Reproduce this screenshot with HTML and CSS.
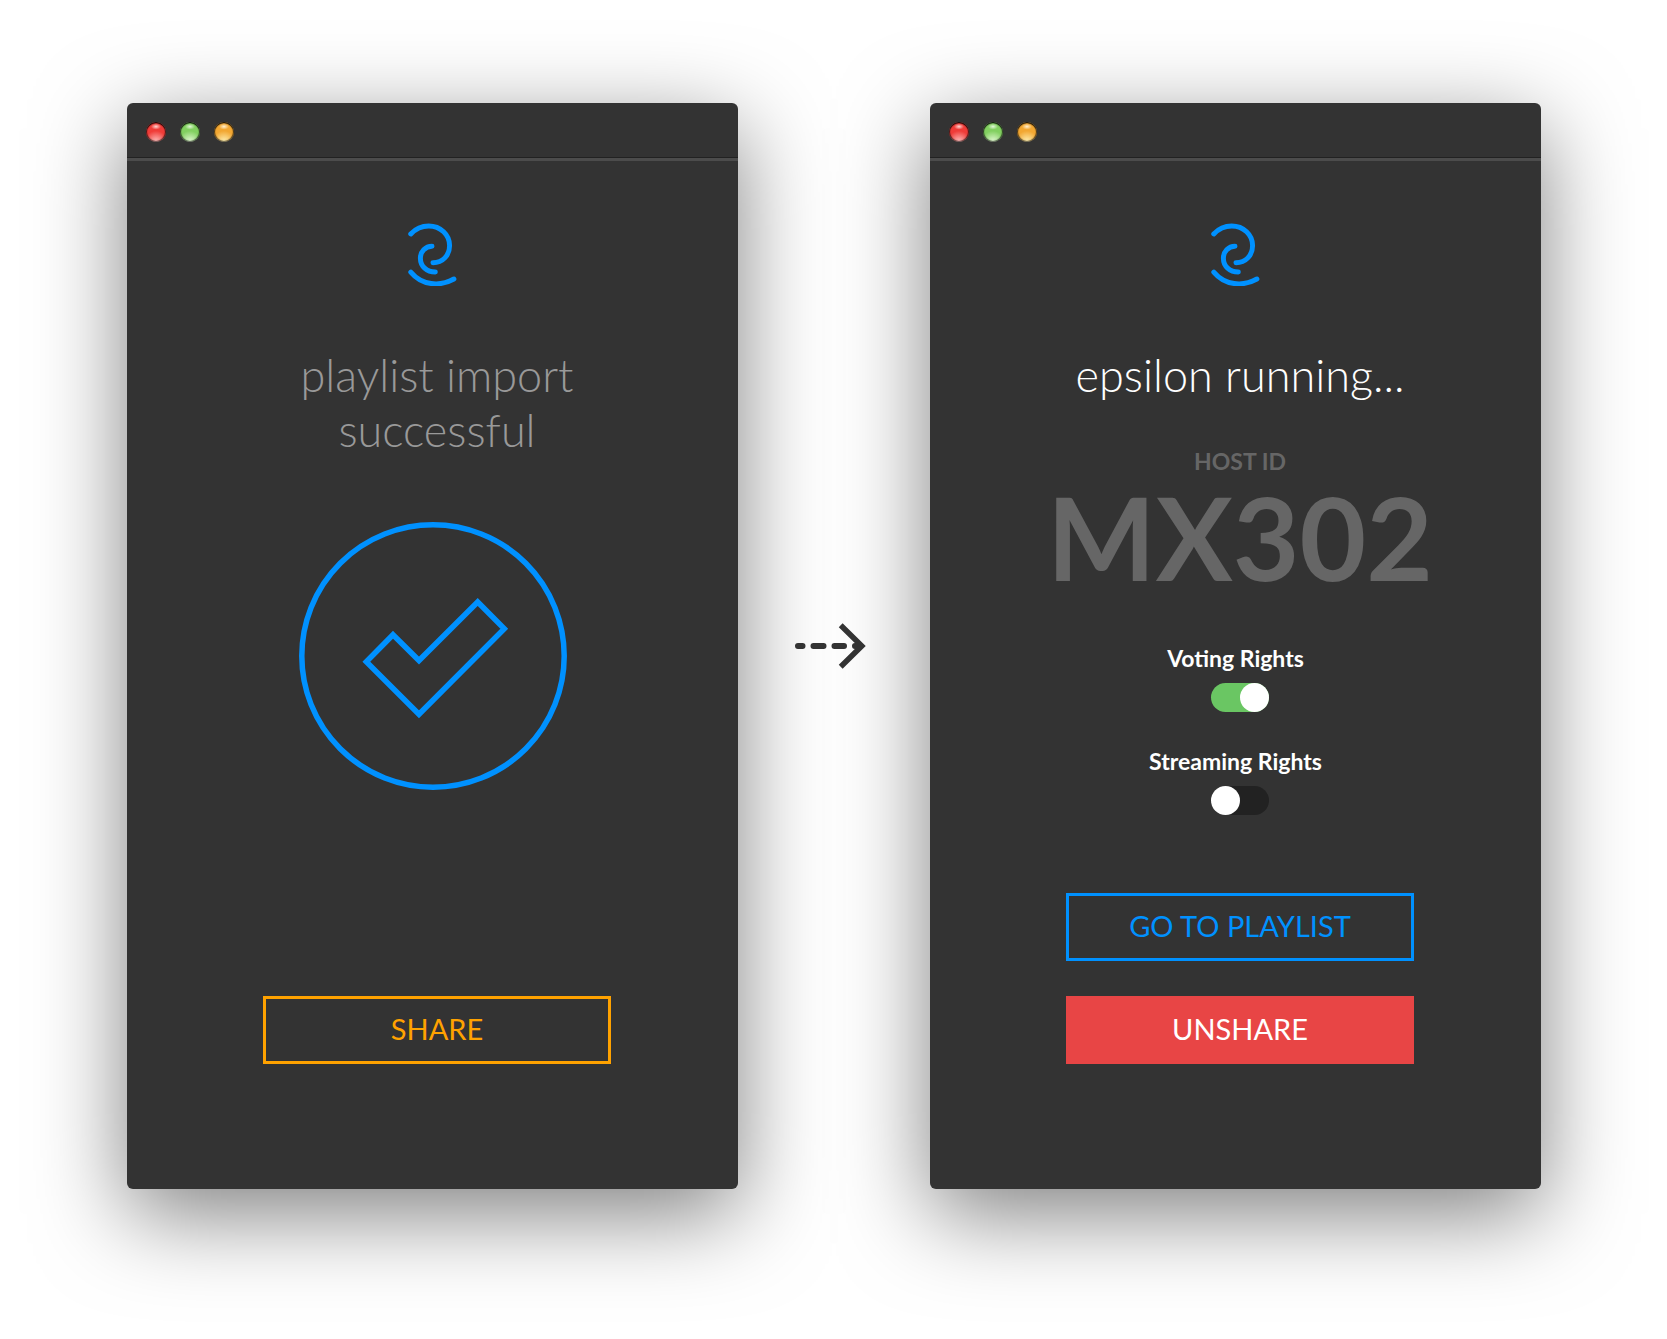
FILE: index.html
```html
<!DOCTYPE html>
<html lang="en">
<head>
<meta charset="utf-8">
<meta name="viewport" content="width=device-width, initial-scale=1">
<title>epsilon</title>
<link rel="stylesheet" href="styles.css">
</head>
<body>
<main class="flow">
  <section class="window">
    <header class="titlebar">
      <button class="light light-red" type="button" aria-label="Close"></button>
      <button class="light light-green" type="button" aria-label="Zoom"></button>
      <button class="light light-amber" type="button" aria-label="Minimize"></button>
    </header>
    <div class="screen">
      <svg class="logo" viewBox="54 54 147 190" aria-hidden="true">
        <path d="M62 87C76 72 95 63 116 63C152 63 179 90 179 122C179 152 158 174 129 174"/>
        <path d="M126 124C106 124 91 140 91 160C91 184 110 202 136 202"/>
        <path d="M62 202C95 242 149 247 192 223"/>
      </svg>
      <h1 class="title title-muted inset">playlist import successful</h1>
      <svg class="success" viewBox="0 0 268 268" aria-hidden="true">
        <circle cx="134" cy="134" r="131.2"/>
        <path d="M94 112.7L120 138.5L178.7 80L205.3 106.7L120 192.3L67.3 139.7Z"/>
      </svg>
      <div class="actions inset">
        <button class="button button-share" type="button">SHARE</button>
      </div>
    </div>
  </section>

  <svg class="arrow" viewBox="0 0 72 46" aria-hidden="true">
    <path class="arrow-dash" d="M4 23H8.500M19.500 23H29.500M40.500 23H50M61 23H66"/>
    <path class="arrow-head" d="M46.700 2.300L67.800 23L46.700 43.700"/>
  </svg>

  <section class="window">
    <header class="titlebar">
      <button class="light light-red" type="button" aria-label="Close"></button>
      <button class="light light-green" type="button" aria-label="Zoom"></button>
      <button class="light light-amber" type="button" aria-label="Minimize"></button>
    </header>
    <div class="screen">
      <svg class="logo" viewBox="54 54 147 190" aria-hidden="true">
        <path d="M62 87C76 72 95 63 116 63C152 63 179 90 179 122C179 152 158 174 129 174"/>
        <path d="M126 124C106 124 91 140 91 160C91 184 110 202 136 202"/>
        <path d="M62 202C95 242 149 247 192 223"/>
      </svg>
      <h1 class="title inset">epsilon running...</h1>
      <div class="host inset">
        <p class="host-label">HOST ID</p>
        <p class="host-id">MX302</p>
      </div>
      <div class="rights">
        <div class="right">
          <label for="voting">Voting Rights</label>
          <div class="inset"><input class="switch" id="voting" type="checkbox" role="switch" checked></div>
        </div>
        <div class="right">
          <label for="streaming">Streaming Rights</label>
          <div class="inset"><input class="switch" id="streaming" type="checkbox" role="switch"></div>
        </div>
      </div>
      <div class="actions inset">
        <button class="button button-playlist" type="button">GO TO PLAYLIST</button>
        <button class="button button-unshare" type="button">UNSHARE</button>
      </div>
    </div>
  </section>
</main>
</body>
</html>
```
FILE: styles.css
```css
:root {
  --blue: #0091ff;
  --orange: #ffa200;
  --red: #e84545;
  --green: #6ac663;
  --dark: #333333;
}

* {
  box-sizing: border-box;
}

body {
  margin: 0;
  background: #ffffff;
  color: #ffffff;
  font-family: Lato, "Liberation Sans", sans-serif;
}

h1,
p {
  margin: 0;
}

.flow {
  display: grid;
  grid-template-columns: minmax(400px, 1fr) 192px minmax(400px, 1fr);
  min-height: 100vh;
  padding: 103px 126px 150px 127px;
}

.window {
  display: flex;
  flex-direction: column;
  border-radius: 6px;
  background: var(--dark);
  box-shadow: 0 25px 90px rgba(0, 0, 0, 0.5);
}

/* Title bar */
.titlebar {
  display: flex;
  gap: 14px;
  height: 55px;
  padding: 19px 19px 0;
  border-bottom: 1px solid #222222;
}

.light {
  width: 20px;
  height: 20px;
  padding: 0;
  border: 0;
  border-radius: 50%;
  box-shadow: inset 0 1px 1px rgba(0, 0, 0, 0.8), inset 0 0 1px 1px rgba(0, 0, 0, 0.6);
}

.light-red {
  background:
    radial-gradient(ellipse 5px 3px at 50% 23%, #ffd6d3, transparent),
    radial-gradient(circle at 50% 100%, #ffc4c2, transparent 50%),
    #f03c38;
}

.light-green {
  background:
    radial-gradient(ellipse 5px 3px at 50% 23%, #e2f7d8, transparent),
    radial-gradient(circle at 50% 100%, #e8fbd9, transparent 50%),
    #82d060;
}

.light-amber {
  background:
    radial-gradient(ellipse 5px 3px at 50% 23%, #fff0d0, transparent),
    radial-gradient(circle at 50% 100%, #fff3b8, transparent 50%),
    #f2a732;
}

/* Window content */
.screen {
  display: flex;
  flex: 1;
  flex-direction: column;
  align-items: center;
  padding: 62px 0 125px;
  border-top: 3px solid #4c4c4c;
}

.inset {
  padding-left: 9px;
}

.logo {
  width: 49px;
  height: 63px;
  fill: none;
  stroke: var(--blue);
  stroke-width: 15;
  stroke-linecap: round;
}

.title {
  max-width: 357px;
  margin-top: 62px;
  font-size: 45px;
  font-weight: 300;
  line-height: 55px;
  text-align: center;
}

.title-muted {
  color: #999999;
}

.success {
  width: 268px;
  height: 268px;
  margin-top: 64px;
  fill: none;
  stroke: var(--blue);
  stroke-width: 5.5;
}

.host {
  margin-top: 44px;
  color: #666666;
  font-weight: 700;
  text-align: center;
}

.host-label {
  font-size: 23px;
  line-height: 28px;
}

.host-id {
  margin-top: 3px;
  font-size: 115px;
  line-height: 116px;
}

.rights {
  display: flex;
  flex-direction: column;
  gap: 35px;
  margin-top: 50px;
  font-size: 23px;
  font-weight: 700;
  line-height: 28px;
}

.right {
  display: flex;
  flex-direction: column;
  align-items: center;
  gap: 11px;
}

.switch {
  display: block;
  width: 58px;
  height: 29px;
  margin: 0;
  border-radius: 15px;
  background: #222222;
  appearance: none;
}

.switch::before {
  display: block;
  width: 29px;
  height: 29px;
  border-radius: 50%;
  background: #ffffff;
  content: "";
}

.switch:checked {
  background: var(--green);
}

.switch:checked::before {
  margin-left: auto;
}

.actions {
  display: flex;
  flex-direction: column;
  gap: 35px;
  margin-top: auto;
}

.button {
  width: 348px;
  height: 68px;
  padding: 0 0 2px;
  border: 3px solid currentColor;
  background: transparent;
  font-family: inherit;
  font-size: 29px;
  line-height: 36px;
}

.button-share {
  color: var(--orange);
}

.button-playlist {
  color: var(--blue);
}

.button-unshare {
  border-color: var(--red);
  background: var(--red);
  color: #ffffff;
}

/* Step arrow between the windows */
.arrow {
  z-index: 1;
  align-self: center;
  justify-self: center;
  width: 72px;
  height: 46px;
  margin-right: 8px;
  fill: none;
  stroke: var(--dark);
}

.arrow-dash {
  stroke-width: 6;
  stroke-linecap: round;
}

.arrow-head {
  stroke-width: 5.5;
}
```
